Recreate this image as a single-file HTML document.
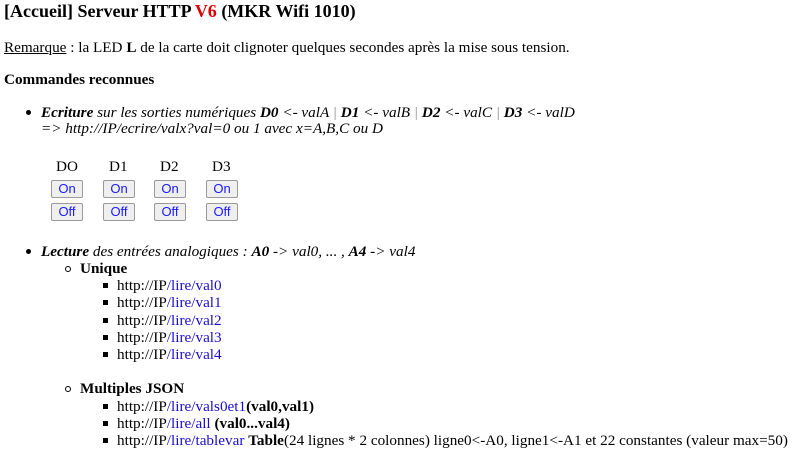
<!DOCTYPE html>
<html><head><meta charset="utf-8"><style>
body{margin:0;width:800px;height:464px;background:#fff;font-family:"Liberation Serif",serif;font-size:15.2px;color:#000;position:relative;overflow:hidden}
.a{position:absolute;white-space:nowrap;line-height:17px}
.l{color:#1a0dcc}
.g{color:#888}
.btn{position:absolute;width:30px;height:16px;border:1px solid #9a9a9a;border-radius:2px;background:#efefef;font-family:"Liberation Sans",sans-serif;font-size:13px;color:#1a1aff;text-align:center;line-height:16px}
.dot{position:absolute;width:5px;height:5px;background:#000;border-radius:50%}
.cir{position:absolute;width:4px;height:4px;border:1px solid #000;border-radius:50%}
.sq{position:absolute;width:5px;height:5px;background:#000}
</style></head><body>
<div class="a" style="left:4px;top:1px;font-size:18px;font-weight:bold;line-height:20px">[Accueil] Serveur HTTP <span style="color:#e00000">V6</span> (MKR Wifi 1010)</div>
<div class="a" style="left:4px;top:39px"><span style="text-decoration:underline">Remarque</span> : la LED <b>L</b> de la carte doit clignoter quelques secondes après la mise sous tension.</div>
<div class="a" style="left:4px;top:71px;font-weight:bold">Commandes reconnues</div>
<div class="dot" style="left:26px;top:110px"></div>
<div class="a" style="left:41px;top:104px;font-style:italic"><b>Ecriture</b> sur les sorties numériques <b>D0</b> &lt;- valA <span class="g">|</span> <b>D1</b> &lt;- valB <span class="g">|</span> <b>D2</b> &lt;- valC <span class="g">|</span> <b>D3</b> &lt;- valD</div>
<div class="a" style="left:41px;top:120px;font-style:italic">=&gt; http://IP/ecrire/valx?val=0 ou 1 avec x=A,B,C ou D</div>
<div class="a" style="left:56px;top:158px">DO</div>
<div class="a" style="left:109px;top:158px">D1</div>
<div class="a" style="left:160px;top:158px">D2</div>
<div class="a" style="left:212px;top:158px">D3</div>
<div class="btn" style="left:51px;top:180px">On</div>
<div class="btn" style="left:103px;top:180px">On</div>
<div class="btn" style="left:154px;top:180px">On</div>
<div class="btn" style="left:206px;top:180px">On</div>
<div class="btn" style="left:51px;top:203px">Off</div>
<div class="btn" style="left:103px;top:203px">Off</div>
<div class="btn" style="left:154px;top:203px">Off</div>
<div class="btn" style="left:206px;top:203px">Off</div>
<div class="dot" style="left:26px;top:249px"></div>
<div class="a" style="left:41px;top:243px;font-style:italic"><b>Lecture</b> des entrées analogiques : <b>A0</b> -&gt; val0, ... , <b>A4</b> -&gt; val4</div>
<div class="cir" style="left:65px;top:266px"></div>
<div class="a" style="left:80px;top:260px;font-weight:bold">Unique</div>
<div class="sq" style="left:103px;top:283px"></div><div class="a" style="left:117px;top:277px">http://IP<span class="l">/lire/val0</span></div>
<div class="sq" style="left:103px;top:300px"></div><div class="a" style="left:117px;top:294px">http://IP<span class="l">/lire/val1</span></div>
<div class="sq" style="left:103px;top:318px"></div><div class="a" style="left:117px;top:312px">http://IP<span class="l">/lire/val2</span></div>
<div class="sq" style="left:103px;top:335px"></div><div class="a" style="left:117px;top:329px">http://IP<span class="l">/lire/val3</span></div>
<div class="sq" style="left:103px;top:352px"></div><div class="a" style="left:117px;top:346px">http://IP<span class="l">/lire/val4</span></div>
<div class="cir" style="left:65px;top:386px"></div>
<div class="a" style="left:80px;top:380px;font-weight:bold">Multiples JSON</div>
<div class="sq" style="left:103px;top:404px"></div><div class="a" style="left:117px;top:398px">http://IP<span class="l">/lire/vals0et1</span><b>(val0,val1)</b></div>
<div class="sq" style="left:103px;top:421px"></div><div class="a" style="left:117px;top:415px">http://IP<span class="l">/lire/all</span> <b>(val0...val4)</b></div>
<div class="sq" style="left:103px;top:438px"></div><div class="a" style="left:117px;top:432px">http://IP<span class="l">/lire/tablevar</span> <b>Table</b>(24 lignes * 2 colonnes) ligne0&lt;-A0, ligne1&lt;-A1 et 22 constantes (valeur max=50)</div>
</body></html>
